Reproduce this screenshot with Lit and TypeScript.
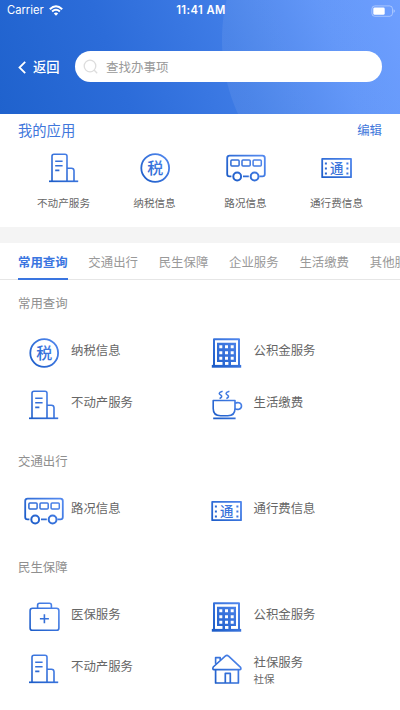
import { LitElement, html, css, svg } from "lit";
import { customElement, property } from "lit/decorators.js";

type IconName = "building" | "tax" | "bus" | "ticket" | "fund" | "cup" | "medkit" | "house";

interface Service {
  icon: IconName;
  name: string;
  note?: string;
}

interface Section {
  title: string;
  services: Service[];
}

const estate: Service = { icon: "building", name: "不动产服务" };
const tax: Service = { icon: "tax", name: "纳税信息" };
const traffic: Service = { icon: "bus", name: "路况信息" };
const toll: Service = { icon: "ticket", name: "通行费信息" };
const fund: Service = { icon: "fund", name: "公积金服务" };

const myApps: Service[] = [estate, tax, traffic, toll];
const tabs = ["常用查询", "交通出行", "民生保障", "企业服务", "生活缴费", "其他服务"];
const sections: Section[] = [
  { title: "常用查询", services: [tax, fund, estate, { icon: "cup", name: "生活缴费" }] },
  { title: "交通出行", services: [traffic, toll] },
  {
    title: "民生保障",
    services: [
      { icon: "medkit", name: "医保服务" },
      fund,
      estate,
      { icon: "house", name: "社保服务", note: "社保" },
    ],
  },
];

/* Every glyph is drawn on a 40x30 canvas centred on (20, 15). */
const glyphs = {
  building: svg`
    <path d="M8 28.2V3.2Q8 1.2 10 1.2H21Q23 1.2 23 3.2V28.2M23 15.2H27.4Q30 15.2 30 17.8V28.2"/>
    <path d="M5 28.3H34.2" stroke-width="1.7"/>
    <path d="M11.2 8.3H18.6M11.2 12.8H18.6M11.2 17.4H15.4"/>`,
  tax: svg`
    <circle cx="20.2" cy="15" r="13.9" stroke-width="1.8"/>
    <text x="20.2" y="20.9" font-size="16">税</text>`,
  bus: svg`
    <path d="M5.4 23.4H3.4Q1.2 23.4 1.2 21V5Q1.2 2.6 3.6 2.6H36.4Q38.8 2.6 38.8 5V21Q38.8 23.4 36.4 23.4H33.4M17 23.4H22.8" stroke-width="1.8"/>
    <rect x="4.9" y="7" width="8.2" height="6" rx="1" stroke-width="1.5"/>
    <rect x="16" y="7" width="8.2" height="6" rx="1" stroke-width="1.5"/>
    <rect x="27.1" y="7" width="8.2" height="6" rx="1" stroke-width="1.5"/>
    <circle cx="11.2" cy="23.5" r="3.9" stroke-width="2"/>
    <circle cx="28.6" cy="23.5" r="3.9" stroke-width="2"/>`,
  ticket: svg`
    <rect x="5.2" y="5.8" width="28.8" height="18.4" stroke-width="1.8"/>
    <path d="M8.9 9.6V21.6M30.4 9.6V21.6" stroke-width="2" stroke-dasharray="2 2.9"/>
    <text x="19.6" y="20" font-size="13.4">通</text>`,
  fund: svg`
    <path d="M7 28V1.3H32V28" stroke-width="2"/>
    <path d="M4.8 28.3H34.2" stroke-width="2.8"/>
    <path class="solid" fill-rule="evenodd" d="M10 4.8H29V24H24V28H15.5V24H10ZM12.3 7.2V10.2H15.3V7.2ZM18 7.2V10.2H21V7.2ZM23.7 7.2V10.2H26.7V7.2ZM12.3 13.2V16.2H15.3V13.2ZM18 13.2V16.2H21V13.2ZM23.7 13.2V16.2H26.7V13.2ZM12.3 18.7V21.7H15.3V18.7ZM18 18.7V21.7H21V18.7ZM23.7 18.7V21.7H26.7V18.7ZM18 24V27.2H21.4V24Z"/>`,
  cup: svg`
    <path d="M6.2 10.5H28V18.5Q28 25.8 20.8 25.8H13.6Q6.2 25.8 6.2 18.5Z"/>
    <path d="M28 13.4C30 12 34.5 12.4 34.5 16C34.5 19.6 30 20 28 18.6M6.2 28.4H28.6"/>
    <path d="M15.6 1.2C10.8 2.8 12 4.2 13.8 5.2C15.6 6.4 14.6 7.4 12.6 8.6M22.4 1.2C17.6 2.8 18.8 4.2 20.6 5.2C22.4 6.4 21.4 7.4 19.4 8.6" stroke-width="1.5"/>`,
  medkit: svg`
    <rect x="6.1" y="6.3" width="28.8" height="22" rx="2.4"/>
    <path d="M13.6 6V3.2Q13.6 1.2 15.6 1.2H25.4Q27.4 1.2 27.4 3.2V6M20.4 12.2V21.2M15.9 16.7H24.9"/>`,
  house: svg`
    <path d="M8.6 9.8V3.6H13.2V6M18.2 2.2L6.2 13Q5.2 15.6 7 15.6H32.6Q34.6 15.6 33.6 13.4L21.6 2.2Q20 .6 18.2 2.2Z"/>
    <path d="M8.6 15.6V29H31.4V15.6M18.3 29V19.4H23.3V29" stroke-width="1.7"/>`,
};

@customElement("service-icon")
export class ServiceIcon extends LitElement {
  @property() name: IconName = "building";

  static styles = css`
    :host { display: block; width: 40px; height: 30px; flex: none; }
    svg { display: block; overflow: visible; }
    .glyph { fill: none; stroke: url(#ink); stroke-width: 1.6; stroke-linejoin: round; }
    .solid { fill: url(#ink); stroke: none; }
    text {
      fill: url(#ink); stroke: none; text-anchor: middle;
      font-family: "Noto Sans CJK SC", sans-serif; font-weight: 500;
    }
  `;

  render() {
    return html`
      <svg width="40" height="30" viewBox="0 0 40 30" aria-hidden="true">
        <defs>
          <linearGradient id="ink" gradientUnits="userSpaceOnUse" x1="6" y1="28" x2="34" y2="2">
            <stop offset="0" stop-color="#1c5cc8" />
            <stop offset="1" stop-color="#5288ee" />
          </linearGradient>
        </defs>
        <g class="glyph">${glyphs[this.name]}</g>
      </svg>
    `;
  }
}

@customElement("app-root")
export class AppRoot extends LitElement {
  static styles = css`
    :host {
      display: block; height: 710px; overflow: hidden; background: #fff; color: #666;
      font-family: "Noto Sans CJK SC", sans-serif; font-size: 12.4px;
    }
    .header {
      height: 114px; color: #fff;
      background:
        radial-gradient(circle at 401px 40px, rgba(255, 255, 255, .07) 178.5px, transparent 179.5px),
        linear-gradient(70deg, #1f62cd 0%, #2c6cd9 30%, #3f7ce6 58%, #5890f8 82%, #6398ff 100%);
    }
    .status {
      display: grid; grid-template-columns: 1fr auto 1fr; align-items: center;
      height: 21px; padding: 0 5px 0 7px;
      font: 11.2px/21px Inter, "Liberation Sans", sans-serif;
    }
    .carrier { display: flex; align-items: center; gap: 5px; }
    .time { font-weight: 600; letter-spacing: .45px; }
    .battery { justify-self: end; }
    .nav { display: flex; align-items: center; height: 31px; padding: 30px 18px 0; }
    .back {
      display: flex; align-items: center; gap: 7px; width: 57px; padding-top: 1px;
      font-size: 13.3px; line-height: 20px; font-weight: 500; white-space: nowrap;
    }
    .search {
      display: flex; align-items: center; gap: 8px; flex: 1; height: 31px;
      box-sizing: border-box; padding-left: 8px; border-radius: 16px;
      background: #fff; color: #999; font-size: 12.5px;
    }
    .mine { height: 112.5px; }
    .mine-head {
      display: flex; justify-content: space-between; align-items: center;
      height: 32px; padding: 0 18px; color: #4177db;
    }
    .mine-title { font-size: 14.3px; line-height: 22px; }
    .apps { display: grid; grid-template-columns: repeat(4, 91px); padding: 7px 18px 0; }
    .app {
      display: flex; flex-direction: column; align-items: center;
      font-size: 10.6px; line-height: 16px; gap: 12px;
    }
    .band { height: 16.5px; background: #f4f4f4; }
    .tabs {
      display: flex; gap: 20.8px; height: 37px; box-sizing: border-box; padding-left: 18px;
      border-bottom: 1px solid #e6e6e6; color: #999; white-space: nowrap;
    }
    .tab { flex: none; height: 37px; line-height: 38px; box-sizing: border-box; }
    .tab.active { color: #3a75e0; font-weight: 700; border-bottom: 2.5px solid #3a75e0; }
    .section { padding-top: 22px; }
    .section:first-child { padding-top: 14px; }
    .section-title { height: 19px; line-height: 19px; padding: 0 18px 13px; color: #8f8f8f; }
    .services {
      display: grid; grid-template-columns: 182.5px 1fr; grid-auto-rows: 52px; padding-left: 24px;
    }
    .service { display: flex; align-items: center; gap: 7px; padding-top: 2px; }
    .label { line-height: 18px; margin-top: -7px; }
    .label.noted { margin-top: 2px; }
    .note { font-size: 10.5px; line-height: 16px; }
  `;

  render() {
    return html`
      <header class="header">
        <div class="status">
          <span class="carrier">
            Carrier
            <svg width="14" height="11" viewBox="0 0 14 11" fill="none" stroke="#fff" stroke-width="2">
              <path d="M.8 4.2Q7 -1.7 13.2 4.2M3.1 6.6Q7 3 10.9 6.6" />
              <path d="M4.8 8.4Q7 6.5 9.2 8.4L7 10.7Z" fill="#fff" stroke="none" />
            </svg>
          </span>
          <span class="time">11:41 AM</span>
          <svg class="battery" width="24" height="12" viewBox="0 0 24 12">
            <rect x=".9" y=".9" width="20.6" height="10.4" rx="3" fill="none" stroke="#fff" stroke-opacity=".4" />
            <rect x="2.3" y="2.4" width="11.4" height="7.4" rx="1.4" fill="#fff" />
            <path d="M22.5 4.3Q24 5 24 6.1T22.5 7.9Z" fill="#fff" fill-opacity=".4" />
          </svg>
        </div>
        <div class="nav">
          <div class="back">
            <svg width="8" height="13" viewBox="0 0 8 13" fill="none" stroke="#fff" stroke-width="1.8">
              <path d="M7.2 .8L1.5 6.5L7.2 12.2" />
            </svg>
            返回
          </div>
          <div class="search">
            <svg width="15" height="15" viewBox="0 0 15 15" fill="none" stroke="#ddd" stroke-width="1.3">
              <circle cx="7" cy="7" r="5.8" /><path d="M11 11L14.2 14.2" />
            </svg>
            查找办事项
          </div>
        </div>
      </header>
      <section class="mine">
        <div class="mine-head">
          <span class="mine-title">我的应用</span><span>编辑</span>
        </div>
        <div class="apps">
          ${myApps.map(
            (a) => html`<div class="app"><service-icon .name=${a.icon}></service-icon><span>${a.name}</span></div>`
          )}
        </div>
      </section>
      <div class="band"></div>
      <nav class="tabs">
        ${tabs.map((t, i) => html`<span class="tab ${i === 0 ? "active" : ""}">${t}</span>`)}
      </nav>
      <main>
        ${sections.map(
          (s) => html`
            <section class="section">
              <div class="section-title">${s.title}</div>
              <div class="services">
                ${s.services.map(
                  (v) => html`
                    <div class="service">
                      <service-icon .name=${v.icon}></service-icon>
                      <div class="label ${v.note ? "noted" : ""}">
                        ${v.name}${v.note ? html`<div class="note">${v.note}</div>` : ""}
                      </div>
                    </div>
                  `
                )}
              </div>
            </section>
          `
        )}
      </main>
    `;
  }
}
